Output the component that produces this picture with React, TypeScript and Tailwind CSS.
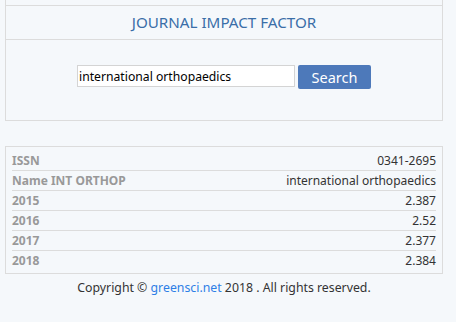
const rows = [
  { label: 'ISSN', value: '0341-2695' },
  { label: 'Name INT ORTHOP', value: 'international orthopaedics' },
  { label: '2015', value: '2.387' },
  { label: '2016', value: '2.52' },
  { label: '2017', value: '2.377' },
  { label: '2018', value: '2.384' },
]

export default function App() {
  return (
    <div className="w-[456px] h-[322px] overflow-hidden bg-[#f5f8fb] font-['Noto_Sans',sans-serif]">
      <div className="ml-[5px] w-[438px] border-x border-b border-[#dcdcdc]">
        <div className="h-[6px] border-b border-[#dcdcdc]" />
        <div className="h-[34px] border-b border-[#dcdcdc] flex items-center justify-center">
          <h1 className="text-[15.2px] text-[#3a6ea8]">JOURNAL IMPACT FACTOR</h1>
        </div>
        <div className="h-[80px] flex justify-center pt-[25px] gap-[3px]">
          <input
            className="w-[218px] h-[22px] bg-white border border-[#d4d4d4] px-[1px] text-[12.2px] text-black outline-none"
            defaultValue="international orthopaedics"
          />
          <button className="w-[73px] h-[24px] bg-[#4d79ba] rounded-[2px] text-white text-[14.5px] leading-none">
            Search
          </button>
        </div>
      </div>

      <div className="ml-[5px] mt-[25px] w-[438px] border border-[#dcdcdc] px-[6px] pt-[4px] pb-[2px]">
        {rows.map((r, i) => (
          <div
            key={r.label}
            className={`h-[20px] flex items-center justify-between text-[12px] ${i < rows.length - 1 ? 'border-b border-[#dcdcdc]' : ''}`}
          >
            <span className="font-bold text-[#999]">{r.label}</span>
            <span className="text-[#333]">{r.value}</span>
          </div>
        ))}
      </div>

      <p className="ml-[5px] w-[438px] mt-[5px] text-center text-[12.3px] text-[#333]">
        Copyright © <a className="text-[#2d7ee6]">greensci.net</a> 2018 . All rights reserved.
      </p>
    </div>
  )
}
